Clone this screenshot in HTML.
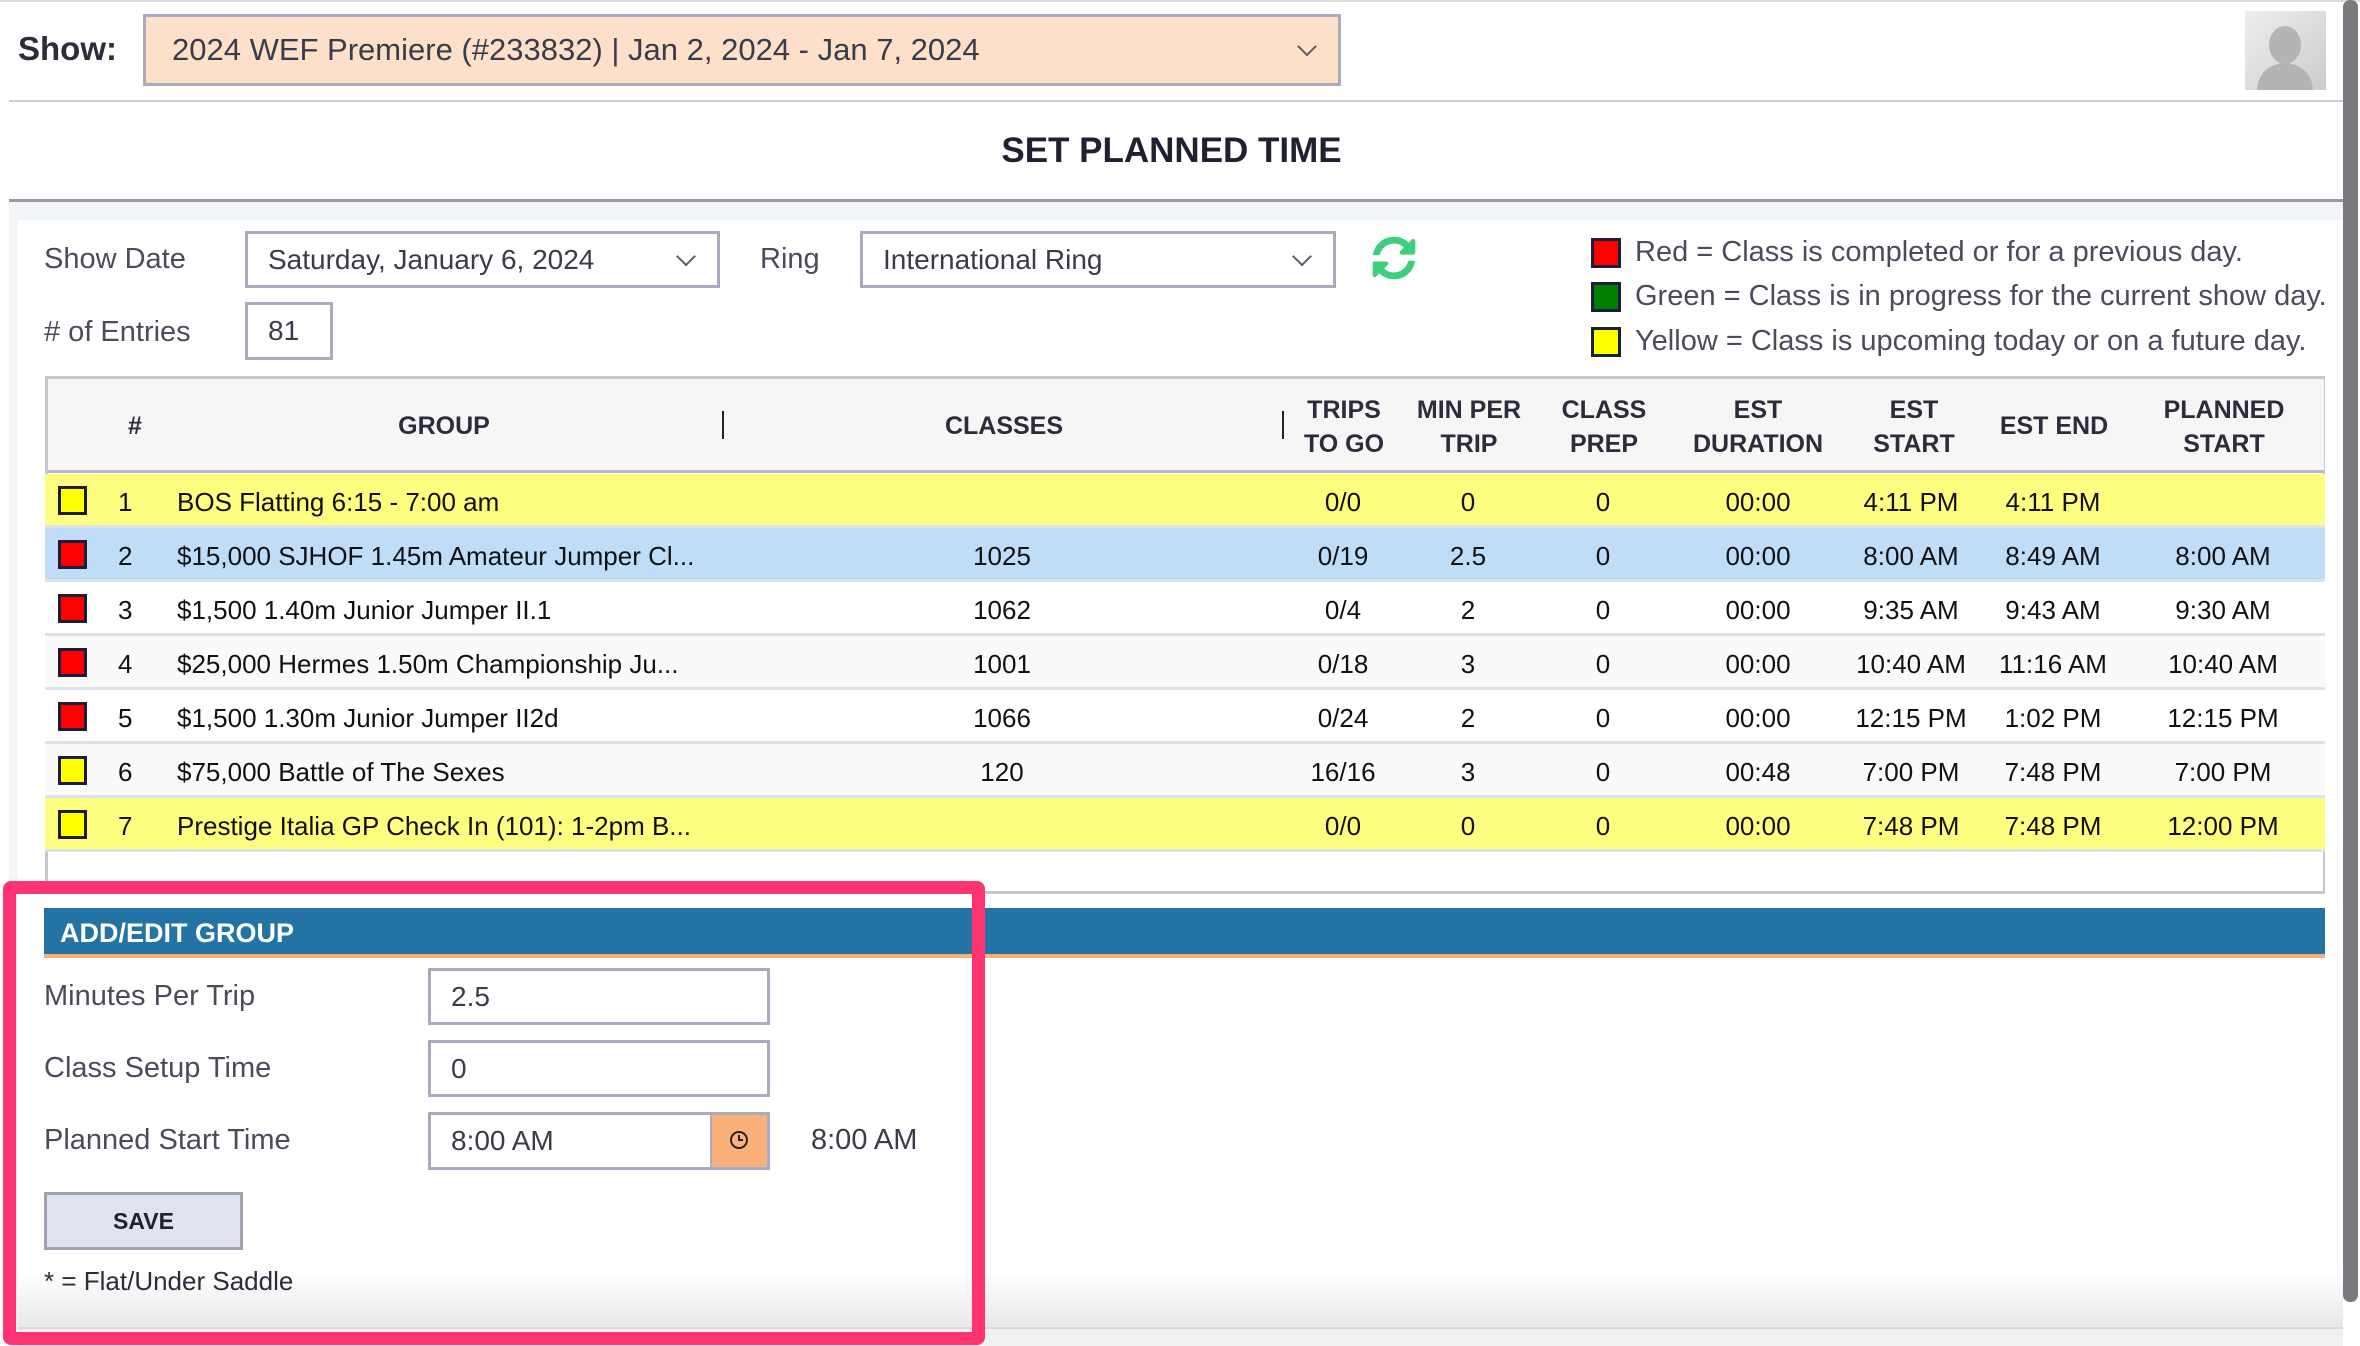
<!DOCTYPE html>
<html><head><meta charset="utf-8"><style>
*{box-sizing:border-box;margin:0;padding:0}
body{width:2360px;height:1346px;overflow:hidden;background:#fff;font-family:"Liberation Sans",sans-serif;color:#2b2d3a;position:relative}
.a{position:absolute}
.sel{position:absolute;border:3px solid #a9abbf;background:#fff;font-size:28px;color:#3a3c4a;padding-left:20px;display:flex;align-items:center}
.chev{position:absolute;right:24px;top:50%;width:14px;height:14px;border-right:2.5px solid #5a5c70;border-bottom:2.5px solid #5a5c70;transform:translateY(-75%) rotate(45deg)}
.lbl{position:absolute;font-size:29px;color:#4a4c5c}
.hd{position:absolute;font-size:25px;font-weight:bold;text-align:center;line-height:34px;color:#2b2d3a;transform:translateX(-50%);white-space:nowrap}
.row{position:absolute;left:45px;width:2280px;height:54px;border-bottom:3px solid #dde1ea;font-size:26px;color:#111}
.row span{position:absolute;top:13px;white-space:nowrap}
.c{transform:translateX(-50%)}
.sq{position:absolute;left:13px;top:12px;width:29px;height:29px;border:3px solid #1c1c3c}
.inp{position:absolute;border:3px solid #a9abbf;background:#fff;font-size:28px;color:#3a3c4a;padding-left:20px;display:flex;align-items:center}
</style></head><body>
<div class="a" style="left:0;top:0;width:2360px;height:2px;background:#ddd"></div>
<div class="a" style="left:18px;top:30px;font-size:33px;font-weight:bold;color:#2b2d3a">Show:</div>
<div class="sel" style="left:143px;top:14px;width:1198px;height:72px;background:#fde0ca;font-size:31px;padding-left:26px">2024 WEF Premiere (#233832) | Jan 2, 2024 - Jan 7, 2024<div class="chev"></div></div>
<div class="a" style="left:2245px;top:11px;width:81px;height:79px;background:linear-gradient(135deg,#eee,#ccc)">
<svg width="81" height="79" viewBox="0 0 81 79"><ellipse cx="40" cy="34" rx="16" ry="19" fill="#b4b4b6"/><path d="M12 79 Q14 54 40 52 Q66 54 68 79Z" fill="#b4b4b6"/></svg></div>
<div class="a" style="left:9px;top:100px;width:2336px;height:2px;background:#d0d0d4"></div>
<div class="a" style="left:0;top:102px;width:2343px;text-align:center;font-size:35px;font-weight:bold;line-height:98px;color:#1f2133">SET PLANNED TIME</div>
<div class="a" style="left:9px;top:199px;width:2336px;height:3px;background:#9a9a9e"></div>
<div class="a" style="left:9px;top:202px;width:2336px;height:1144px;background:#f3f6f9"></div>
<div class="a" style="left:18px;top:220px;width:2327px;height:1126px;background:#fff"></div>
<div class="a" style="left:2343px;top:0;width:15px;height:1302px;background:#7a7a7e;border-radius:7px"></div>

<div class="lbl" style="left:44px;top:243px">Show Date</div>
<div class="sel" style="left:245px;top:231px;width:475px;height:57px">Saturday, January 6, 2024<div class="chev"></div></div>
<div class="lbl" style="left:760px;top:243px">Ring</div>
<div class="sel" style="left:860px;top:231px;width:476px;height:57px">International Ring<div class="chev"></div></div>
<svg class="a" style="left:1372px;top:236px" width="44" height="44" viewBox="0 0 512 512"><path fill="#3ecf7e" d="M370.7 133.3C339.5 104 298.9 88 255.8 88c-77.5.1-144.3 53.2-162.8 126.9-1.3 5.4-6.1 9.2-11.7 9.2H24.1c-7.5 0-13.2-6.8-11.8-14.2C33.9 94.9 134.8 8 256 8c66.4 0 126.8 26.1 171.3 68.7L463 41c15.1-15.1 41-4.4 41 17v134c0 13.3-10.7 24-24 24H346c-21.4 0-32.1-25.9-17-41l41.7-41.7zM32 296h134c21.4 0 32.1 25.9 17 41l-41.8 41.8c31.3 29.3 71.8 45.3 114.9 45.2 77.4-.1 144.3-53.1 162.8-126.8 1.3-5.4 6.1-9.2 11.7-9.2h57.3c7.5 0 13.2 6.8 11.8 14.2C478.1 417.1 377.2 504 256 504c-66.4 0-126.8-26.1-171.3-68.7L49 471c-15.1 15.1-41 4.4-41-17V320c0-13.3 10.7-24 24-24z"/></svg>
<div class="lbl" style="left:44px;top:316px"># of Entries</div>
<div class="inp" style="left:245px;top:302px;width:88px;height:58px;padding-left:20px">81</div>

<div class="a" style="left:1591px;top:238px;width:30px;height:30px;background:#f00;border:3px solid #1c1c3c"></div>
<div class="a" style="left:1591px;top:282px;width:30px;height:30px;background:#008000;border:3px solid #1c1c3c"></div>
<div class="a" style="left:1591px;top:327px;width:30px;height:30px;background:#ff0;border:3px solid #1c1c3c"></div>
<div class="lbl" style="left:1635px;top:236px;font-size:29px">Red = Class is completed or for a previous day.</div>
<div class="lbl" style="left:1635px;top:280px;font-size:29px">Green = Class is in progress for the current show day.</div>
<div class="lbl" style="left:1635px;top:325px;font-size:29px">Yellow = Class is upcoming today or on a future day.</div>

<div class="a" style="left:45px;top:376px;width:2280px;height:518px;border:3px solid #c4c6d0;border-right-width:2px;background:#fff"></div>
<div class="a" style="left:48px;top:379px;width:2276px;height:94px;background:#f6f6f6;border-bottom:3px solid #b8bac6"></div>
<div class="hd" style="left:135px;top:409px">#</div>
<div class="hd" style="left:444px;top:409px">GROUP</div>
<div class="a" style="left:722px;top:411px;width:2px;height:28px;background:#222"></div>
<div class="hd" style="left:1004px;top:409px">CLASSES</div>
<div class="a" style="left:1282px;top:411px;width:2px;height:28px;background:#222"></div>
<div class="hd" style="left:1344px;top:393px">TRIPS<br>TO GO</div>
<div class="hd" style="left:1469px;top:393px">MIN PER<br>TRIP</div>
<div class="hd" style="left:1604px;top:393px">CLASS<br>PREP</div>
<div class="hd" style="left:1758px;top:393px">EST<br>DURATION</div>
<div class="hd" style="left:1914px;top:393px">EST<br>START</div>
<div class="hd" style="left:2054px;top:409px">EST END</div>
<div class="hd" style="left:2224px;top:393px">PLANNED<br>START</div>

<div class="row" style="top:474px;background:#fdfd80"><div class="sq" style="background:#ff0"></div><span style="left:73px">1</span><span style="left:132px">BOS Flatting 6:15 - 7:00 am</span><span class="c" style="left:1298px">0/0</span><span class="c" style="left:1423px">0</span><span class="c" style="left:1558px">0</span><span class="c" style="left:1713px">00:00</span><span class="c" style="left:1866px">4:11 PM</span><span class="c" style="left:2008px">4:11 PM</span></div>
<div class="row" style="top:528px;background:#c0ddf7"><div class="sq" style="background:#f00"></div><span style="left:73px">2</span><span style="left:132px">$15,000 SJHOF 1.45m Amateur Jumper Cl...</span><span class="c" style="left:957px">1025</span><span class="c" style="left:1298px">0/19</span><span class="c" style="left:1423px">2.5</span><span class="c" style="left:1558px">0</span><span class="c" style="left:1713px">00:00</span><span class="c" style="left:1866px">8:00 AM</span><span class="c" style="left:2008px">8:49 AM</span><span class="c" style="left:2178px">8:00 AM</span></div>
<div class="row" style="top:582px;background:#fff"><div class="sq" style="background:#f00"></div><span style="left:73px">3</span><span style="left:132px">$1,500 1.40m Junior Jumper II.1</span><span class="c" style="left:957px">1062</span><span class="c" style="left:1298px">0/4</span><span class="c" style="left:1423px">2</span><span class="c" style="left:1558px">0</span><span class="c" style="left:1713px">00:00</span><span class="c" style="left:1866px">9:35 AM</span><span class="c" style="left:2008px">9:43 AM</span><span class="c" style="left:2178px">9:30 AM</span></div>
<div class="row" style="top:636px;background:#fafafa"><div class="sq" style="background:#f00"></div><span style="left:73px">4</span><span style="left:132px">$25,000 Hermes 1.50m Championship Ju...</span><span class="c" style="left:957px">1001</span><span class="c" style="left:1298px">0/18</span><span class="c" style="left:1423px">3</span><span class="c" style="left:1558px">0</span><span class="c" style="left:1713px">00:00</span><span class="c" style="left:1866px">10:40 AM</span><span class="c" style="left:2008px">11:16 AM</span><span class="c" style="left:2178px">10:40 AM</span></div>
<div class="row" style="top:690px;background:#fff"><div class="sq" style="background:#f00"></div><span style="left:73px">5</span><span style="left:132px">$1,500 1.30m Junior Jumper II2d</span><span class="c" style="left:957px">1066</span><span class="c" style="left:1298px">0/24</span><span class="c" style="left:1423px">2</span><span class="c" style="left:1558px">0</span><span class="c" style="left:1713px">00:00</span><span class="c" style="left:1866px">12:15 PM</span><span class="c" style="left:2008px">1:02 PM</span><span class="c" style="left:2178px">12:15 PM</span></div>
<div class="row" style="top:744px;background:#fafafa"><div class="sq" style="background:#ff0"></div><span style="left:73px">6</span><span style="left:132px">$75,000 Battle of The Sexes</span><span class="c" style="left:957px">120</span><span class="c" style="left:1298px">16/16</span><span class="c" style="left:1423px">3</span><span class="c" style="left:1558px">0</span><span class="c" style="left:1713px">00:48</span><span class="c" style="left:1866px">7:00 PM</span><span class="c" style="left:2008px">7:48 PM</span><span class="c" style="left:2178px">7:00 PM</span></div>
<div class="row" style="top:798px;background:#fdfd80"><div class="sq" style="background:#ff0"></div><span style="left:73px">7</span><span style="left:132px">Prestige Italia GP Check In (101): 1-2pm B...</span><span class="c" style="left:1298px">0/0</span><span class="c" style="left:1423px">0</span><span class="c" style="left:1558px">0</span><span class="c" style="left:1713px">00:00</span><span class="c" style="left:1866px">7:48 PM</span><span class="c" style="left:2008px">7:48 PM</span><span class="c" style="left:2178px">12:00 PM</span></div>

<div class="a" style="left:44px;top:908px;width:2281px;height:50px;background:#2374a5;border-bottom:4px solid #f9b07a;color:#fff;font-size:27px;font-weight:bold;padding:10px 0 0 16px">ADD/EDIT GROUP</div>
<div class="lbl" style="left:44px;top:980px">Minutes Per Trip</div>
<div class="inp" style="left:428px;top:968px;width:342px;height:57px">2.5</div>
<div class="lbl" style="left:44px;top:1052px">Class Setup Time</div>
<div class="inp" style="left:428px;top:1040px;width:342px;height:57px">0</div>
<div class="lbl" style="left:44px;top:1124px">Planned Start Time</div>
<div class="inp" style="left:428px;top:1112px;width:342px;height:58px">8:00 AM</div>
<div class="a" style="left:710px;top:1112px;width:60px;height:58px;background:#f9b07a;border:3px solid #a9abbf;border-left-width:2px"></div>
<svg class="a" style="left:729px;top:1130px" width="20" height="20" viewBox="0 0 20 20"><circle cx="10" cy="10" r="8" fill="none" stroke="#222" stroke-width="2"/><path d="M10 5v5h4" fill="none" stroke="#222" stroke-width="2"/></svg>
<div class="lbl" style="left:811px;top:1124px;color:#3a3c4a">8:00 AM</div>
<div class="a" style="left:44px;top:1192px;width:199px;height:58px;background:#dfe3ef;border:3px solid #a0a2b0;font-size:23px;font-weight:bold;text-align:center;line-height:52px;color:#1f2133">SAVE</div>
<div class="a" style="left:44px;top:1266px;font-size:26px;color:#2b2d3a">* = Flat/Under Saddle</div>
<div class="a" style="left:18px;top:1270px;width:2325px;height:58px;background:linear-gradient(#fff,#e8e8ea)"></div>
<div class="a" style="left:44px;top:1266px;font-size:26px;color:#2b2d3a">* = Flat/Under Saddle</div>
<div class="a" style="left:18px;top:1327px;width:2325px;height:19px;background:#f0f0f2;border-top:2px solid #d8d8dc"></div>

<div class="a" style="left:3px;top:881px;width:982px;height:464px;border:13px solid #ff3370;border-radius:8px"></div>
</body></html>
